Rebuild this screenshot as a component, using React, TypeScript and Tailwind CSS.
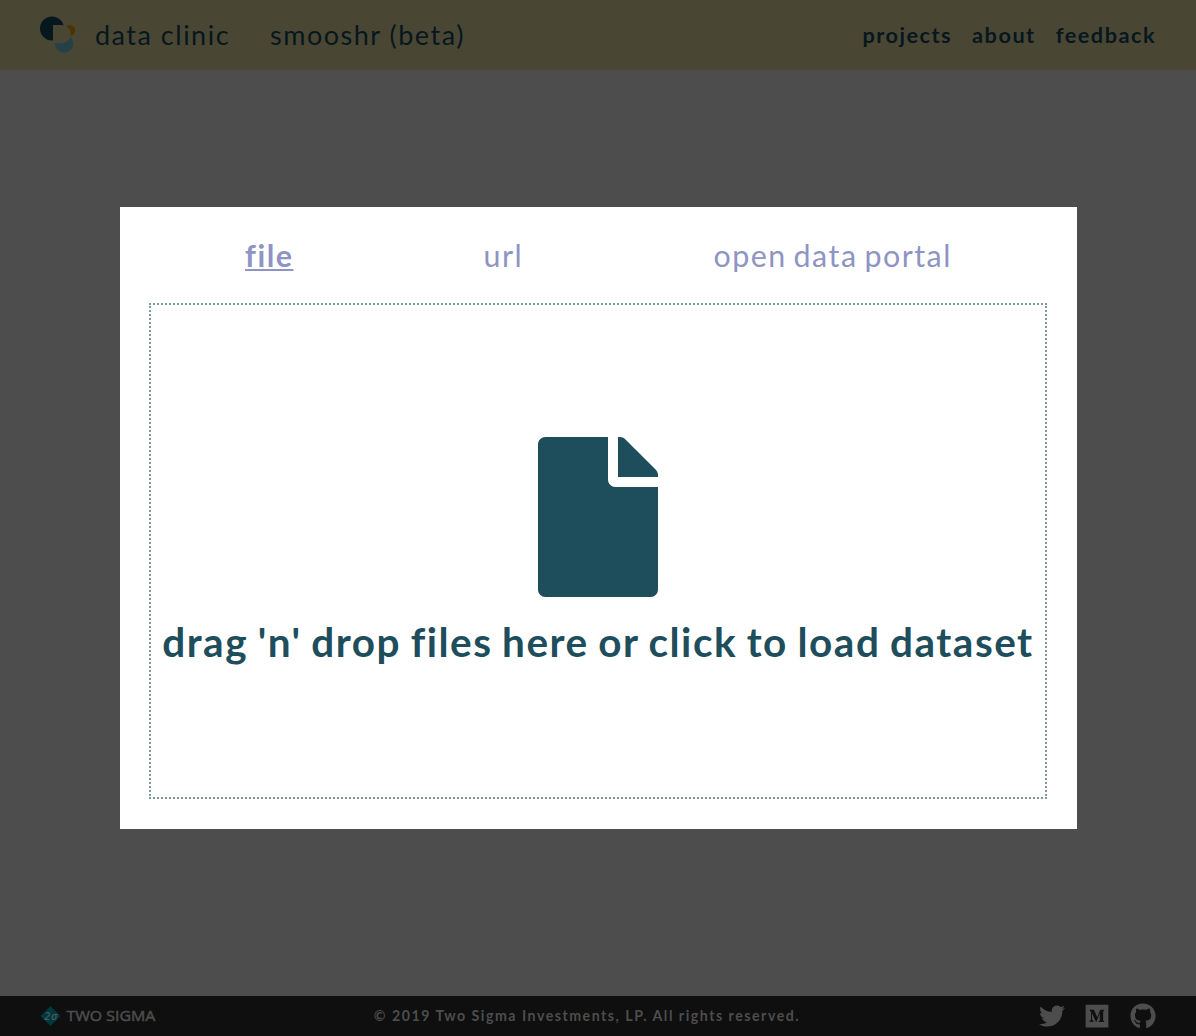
import React from 'react';
import { FaFile, FaTwitter, FaMedium, FaGithub } from 'react-icons/fa';

function ClinicLogo() {
  return (
    <svg width="36" height="38" viewBox="0 0 36 38" className="mr-[19px]">
      <circle cx="12" cy="12.6" r="12" fill="#07171e" />
      <circle cx="29.6" cy="14.5" r="5.5" fill="#4d3300" />
      <circle cx="24.1" cy="27.5" r="9.2" fill="#24414a" />
      <path d="M13 9h8.8a9.15 9.15 0 0 1 0 18.3H13z" fill="#4a4634" />
    </svg>
  );
}

function TwoSigmaLogo() {
  return (
    <svg width="116" height="22" viewBox="0 0 116 22" className="tracking-normal">
      <path d="M10.5 1 20.5 11 10.5 21 .5 11z" fill="#00393d" />
      <text x="4.3" y="14.6" fontSize="10.5" fontStyle="italic" fontWeight="600" fill="#4d5a5a" textLength="13" className="font-['Open_Sans',sans-serif]">2σ</text>
      <text x="26.4" y="16.4" fontSize="14.6" fill="#4d4d4d" stroke="#4d4d4d" strokeWidth="0.5" textLength="89" lengthAdjust="spacingAndGlyphs" className="font-['Open_Sans',sans-serif]">TWO SIGMA</text>
    </svg>
  );
}

export default function App() {
  return (
    <div className="relative flex h-[1036px] w-full flex-col bg-[#4d4d4d] font-['Lato',sans-serif] tracking-[1.5px]">
      <header className="flex h-[70px] items-center justify-between bg-[#4a4634] px-10 text-[#07171e]">
        <div className="flex items-center text-[27px]">
          <ClinicLogo />
          <span>data clinic</span>
          <span className="ml-10">smooshr (beta)</span>
        </div>
        <nav className="flex gap-5 text-[21.7px] font-bold">
          <a>projects</a><a>about</a><a>feedback</a>
        </nav>
      </header>
      <main className="grow" />
      <footer className="flex h-10 items-center justify-between bg-[#0f0f0f] px-10 pb-px text-[#4d4d4d]">
        <TwoSigmaLogo />
        <span className="mr-[21px] text-[14.2px] font-bold">© 2019 Two Sigma Investments, LP. All rights reserved.</span>
        <div className="flex gap-5"><FaTwitter size={26} className="-mr-px" /><FaMedium size={26} /><FaGithub size={26} /></div>
      </footer>
      <section className="absolute top-[207px] left-[120px] flex h-[622px] w-[957px] flex-col bg-white pt-[29px] pr-[30px] pb-[30px] pl-[29px]">
        <div className="flex h-[67px] justify-around pl-px text-[30.4px] leading-[38px] text-[#8e94c3] [word-spacing:-2.4px]">
          <span className="font-bold underline decoration-2 underline-offset-2">file</span><span>url</span><span>open data portal</span>
        </div>
        <div className="flex grow flex-col items-center justify-center border-2 border-dotted border-[#7c9aa4] text-[#1e4d5c]">
          <FaFile size={160} />
          <h1 className="mt-[22px] text-[40.5px] leading-[46px] font-bold whitespace-nowrap [word-spacing:-1.7px]">drag 'n' drop files here or click to load dataset</h1>
        </div>
      </section>
    </div>
  );
}
